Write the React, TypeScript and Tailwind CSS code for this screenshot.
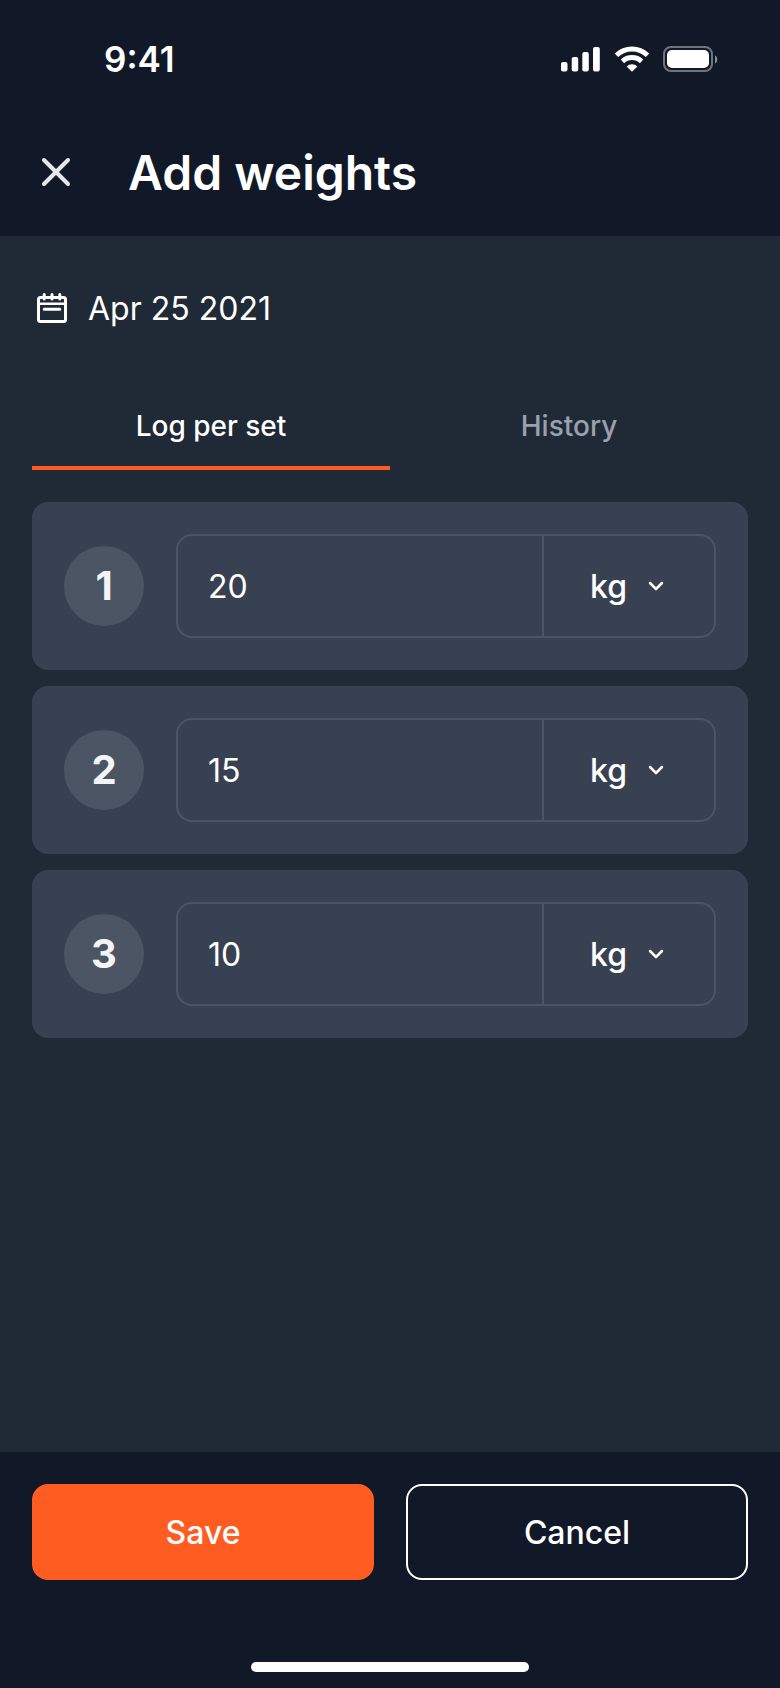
import React from "react";
import { ChevronDown, X } from "lucide-react";

type WeightSet = {
  weight: string;
  unit: "kg" | "lb";
};

const INITIAL_SETS: WeightSet[] = [
  { weight: "20", unit: "kg" },
  { weight: "15", unit: "kg" },
  { weight: "10", unit: "kg" },
];

const TABS = ["Log per set", "History"];

function SignalIcon() {
  return (
    <svg width="40" height="26" viewBox="0 0 40 26" fill="currentColor" aria-hidden="true">
      <rect x="0" y="16" width="6.5" height="9.5" rx="2" />
      <rect x="10.7" y="11" width="6.5" height="14.5" rx="2" />
      <rect x="21.3" y="6" width="6.5" height="19.5" rx="2" />
      <rect x="32" y="1" width="6.8" height="24.5" rx="2" />
    </svg>
  );
}

function WifiIcon() {
  return (
    <svg width="36" height="26" viewBox="0 0 36 26" fill="none" aria-hidden="true">
      <path d="M2.4 9.2a22.6 22.6 0 0 1 31.2 0" stroke="currentColor" strokeWidth="5" />
      <path d="M8.4 15.4a14 14 0 0 1 19.2 0" stroke="currentColor" strokeWidth="5" />
      <path d="M18 25.8l-5.4-5.4a7.8 7.8 0 0 1 10.8 0z" fill="currentColor" />
    </svg>
  );
}

function BatteryIcon() {
  return (
    <svg width="55" height="26" viewBox="0 0 55 26" fill="none" aria-hidden="true">
      <rect x="1" y="1" width="48" height="24" rx="7" stroke="currentColor" strokeWidth="2" opacity="0.4" />
      <path d="M52 9.5c3 1 3 7 0 8z" fill="currentColor" opacity="0.5" />
      <rect x="4" y="4" width="42" height="18" rx="5" fill="currentColor" />
    </svg>
  );
}

function CalendarIcon() {
  return (
    <svg
      width="40"
      height="40"
      viewBox="0 0 40 40"
      fill="none"
      stroke="currentColor"
      strokeWidth="3"
      strokeLinecap="round"
      strokeLinejoin="round"
      aria-hidden="true"
    >
      <rect x="6.5" y="8.5" width="27" height="24" rx="2" />
      <path d="M6.5 14.8h27" strokeWidth="2.6" />
      <path d="M12.2 20.3h15.6M12.2 5.5v4.6M20 5.5v4.6M27.8 5.5v4.6" />
    </svg>
  );
}

function StatusBar() {
  return (
    <div className="flex h-27 items-center justify-between pt-2.5 pr-[62px] pl-26">
      <span className="text-[35px] leading-10 font-semibold">9:41</span>
      <div className="flex items-center gap-[13px]">
        <SignalIcon />
        <WifiIcon />
        <BatteryIcon />
      </div>
    </div>
  );
}

type SetRowProps = {
  index: number;
  set: WeightSet;
  onChange: (patch: Partial<WeightSet>) => void;
};

function SetRow({ index, set, onChange }: SetRowProps) {
  return (
    <li className="flex items-center gap-8 rounded-2xl bg-[#384151] p-8">
      <span className="flex size-20 shrink-0 items-center justify-center rounded-full bg-[#4b5563] text-[40px] leading-12 font-bold text-gray-100">
        {index + 1}
      </span>
      <div className="flex h-26 min-w-0 flex-1 rounded-2xl border-2 border-[#4b5563]">
        <input
          type="text"
          inputMode="decimal"
          aria-label={`Weight for set ${index + 1}`}
          value={set.weight}
          onChange={(e) => onChange({ weight: e.target.value })}
          className="min-w-0 flex-1 bg-transparent px-[30px] pt-0.5 text-[32px] outline-none"
        />
        <div className="relative w-43 shrink-0 border-l-2 border-[#4b5563]">
          <select
            aria-label={`Unit for set ${index + 1}`}
            value={set.unit}
            onChange={(e) => onChange({ unit: e.target.value as WeightSet["unit"] })}
            className="h-full w-full appearance-none bg-transparent pt-0.5 pl-[46px] text-[32px] font-medium outline-none"
          >
            <option value="kg">kg</option>
            <option value="lb">lb</option>
          </select>
          <ChevronDown
            size={24}
            strokeWidth={2.5}
            className="pointer-events-none absolute inset-y-0 right-[46px] my-auto"
          />
        </div>
      </div>
    </li>
  );
}

export default function App() {
  const [sets, setSets] = React.useState(INITIAL_SETS);
  const [tab, setTab] = React.useState(TABS[0]);

  const updateSet = (index: number, patch: Partial<WeightSet>) =>
    setSets((prev) => prev.map((s, i) => (i === index ? { ...s, ...patch } : s)));

  return (
    <div className="flex min-h-screen flex-col bg-[#111827] font-['Inter',sans-serif] text-white">
      <header>
        <StatusBar />
        <div className="flex h-32 items-center gap-12 px-8">
          <button type="button" aria-label="Close" className="text-gray-200">
            <X size={48} strokeWidth={2} />
          </button>
          <h1 className="pt-0.5 text-[48px] leading-16 font-semibold">Add weights</h1>
        </div>
      </header>

      <main className="flex-1 bg-[#202a36] px-8 pt-12">
        <div className="flex h-[50px] items-center gap-4">
          <CalendarIcon />
          <time dateTime="2021-04-25" className="text-[32px] leading-10">
            Apr 25 2021
          </time>
        </div>

        <div role="tablist" className="mt-13 grid grid-cols-2">
          {TABS.map((t) => (
            <button
              key={t}
              type="button"
              role="tab"
              aria-selected={t === tab}
              onClick={() => setTab(t)}
              className={
                t === tab
                  ? "h-21 border-b-4 border-[#ff5c21] text-[28px] font-medium text-white"
                  : "h-21 border-b-4 border-transparent text-[28px] font-medium text-gray-400"
              }
            >
              {t}
            </button>
          ))}
        </div>

        <ul className="mt-8 flex flex-col gap-4">
          {sets.map((s, i) => (
            <SetRow key={i} index={i} set={s} onChange={(patch) => updateSet(i, patch)} />
          ))}
        </ul>
      </main>

      <footer className="px-8 pt-8 pb-4">
        <div className="grid grid-cols-2 gap-8">
          <button type="button" className="h-24 rounded-2xl bg-[#ff5c21] pt-0.5 text-[32px] font-medium">
            Save
          </button>
          <button type="button" className="h-24 rounded-2xl border-2 border-white pt-0.5 text-[32px] font-medium">
            Cancel
          </button>
        </div>
        <div className="mx-auto mt-[82px] h-2.5 w-[278px] rounded-full bg-white" />
      </footer>
    </div>
  );
}
